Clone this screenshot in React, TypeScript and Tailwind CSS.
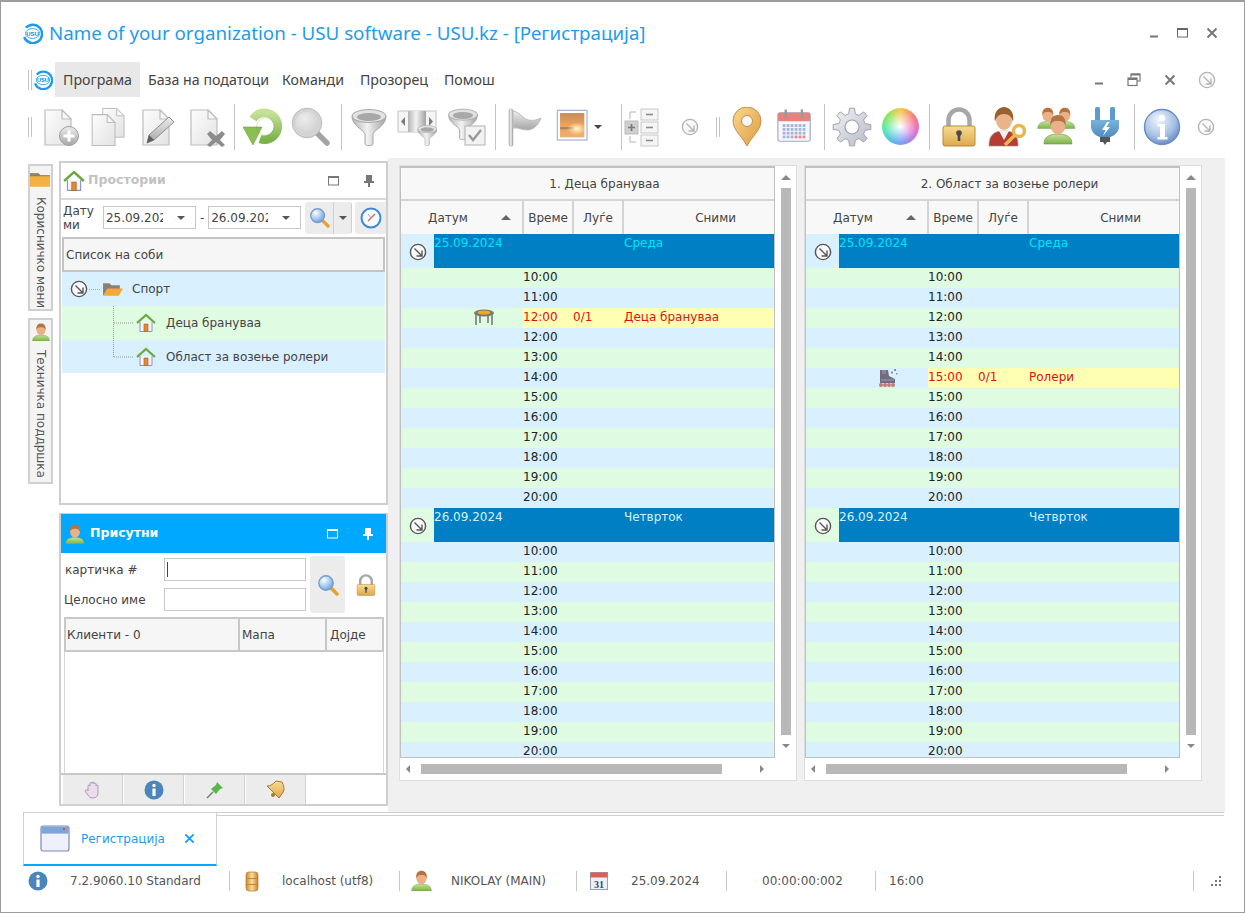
import React from "react";

type P = { s?: number; c?: string };
const Svg = ({ s = 40, vb = 40, children }: { s?: number; vb?: number; children: React.ReactNode }) => (
  <svg width={s} height={s} viewBox={`0 0 ${vb} ${vb}`} className="block shrink-0">{children}</svg>
);

const Defs = () => (
  <svg width="0" height="0" className="block h-0 w-0">
    <defs>
      <linearGradient id="gPage" x1="0" y1="0" x2="1" y2="1"><stop offset="0" stopColor="#fdfdfd" /><stop offset="1" stopColor="#e2e2e2" /></linearGradient>
      <linearGradient id="gGray" x1="0" y1="0" x2="0" y2="1"><stop offset="0" stopColor="#ededed" /><stop offset="1" stopColor="#a6a6a6" /></linearGradient>
      <linearGradient id="gGrayH" x1="0" y1="0" x2="1" y2="0"><stop offset="0" stopColor="#b4b4b4" /><stop offset=".45" stopColor="#f2f2f2" /><stop offset="1" stopColor="#a2a2a2" /></linearGradient>
      <linearGradient id="gGreen" x1="0" y1="0" x2="0" y2="1"><stop offset="0" stopColor="#c4e296" /><stop offset="1" stopColor="#7cb24a" /></linearGradient>
      <linearGradient id="gGold" x1="0" y1="0" x2="0" y2="1"><stop offset="0" stopColor="#f8dc90" /><stop offset="1" stopColor="#dca94c" /></linearGradient>
      <linearGradient id="gPin" x1="0" y1="0" x2="1" y2="1"><stop offset="0" stopColor="#f9d88e" /><stop offset="1" stopColor="#dd9c40" /></linearGradient>
      <linearGradient id="gSun" x1="0" y1="0" x2="0" y2="1"><stop offset="0" stopColor="#c88c58" /><stop offset=".55" stopColor="#f0a45c" /><stop offset="1" stopColor="#eeb070" /></linearGradient>
      <radialGradient id="gGlow"><stop offset="0" stopColor="#fff8d8" /><stop offset="1" stopColor="#fff0b0" stopOpacity="0" /></radialGradient>
      <linearGradient id="gPlug" x1="0" y1="0" x2="0" y2="1"><stop offset="0" stopColor="#79b2dc" /><stop offset="1" stopColor="#4f8cc2" /></linearGradient>
      <radialGradient id="gInfo" cx=".4" cy=".3" r=".8"><stop offset="0" stopColor="#f0f5fc" /><stop offset=".6" stopColor="#a4bfe4" /><stop offset="1" stopColor="#5578b8" /></radialGradient>
      <radialGradient id="gLens" cx=".35" cy=".3" r=".8"><stop offset="0" stopColor="#ffffff" /><stop offset="1" stopColor="#5c9ee0" /></radialGradient>
      <radialGradient id="gGlass" cx=".4" cy=".35" r=".8"><stop offset="0" stopColor="#ececec" /><stop offset="1" stopColor="#c8c8c8" /></radialGradient>
      <linearGradient id="gDb" x1="0" y1="0" x2="1" y2="0"><stop offset="0" stopColor="#d08a30" /><stop offset=".5" stopColor="#fbdc9c" /><stop offset="1" stopColor="#c88228" /></linearGradient>
      <linearGradient id="gGear" x1="0" y1="0" x2="1" y2="1"><stop offset="0" stopColor="#f2f3f6" /><stop offset="1" stopColor="#b6bac4" /></linearGradient>
    </defs>
  </svg>
);

const Logo = ({ s = 21 }: P) => (
  <Svg s={s} vb={24}>
    <path d="M4.5 5.5A10.5 10.5 0 1 1 2.5 16" fill="none" stroke="#1c9cf0" strokeWidth="2.8" />
    <ellipse cx="12" cy="12" rx="8" ry="5.6" fill="#fff" stroke="#1c9cf0" strokeWidth="1" />
    <text x="12" y="14.4" textAnchor="middle" fontSize="6.8" fontWeight="700" fill="#1780cc" fontFamily="Liberation Sans, sans-serif">USU</text>
  </Svg>
);

const Page = ({ x = 0, y = 0 }: { x?: number; y?: number }) => (
  <g transform={`translate(${x} ${y})`}>
    <path d="M7 3h17l9 9v26H7z" fill="url(#gPage)" stroke="#bdbdbd" strokeWidth="1.2" />
    <path d="M24 3v9h9z" fill="#f7f7f7" stroke="#bdbdbd" strokeWidth="1.2" strokeLinejoin="round" />
  </g>
);
const FilePlus = () => (
  <Svg>
    <Page x={-3} />
    <circle cx="28" cy="29" r="9.5" fill="url(#gGray)" stroke="#a0a0a0" />
    <path d="M28 23.5v11M22.5 29h11" stroke="#fff" strokeWidth="3" />
  </Svg>
);
const FileCopy = () => (
  <Svg>
    <g transform="translate(8 -1) scale(.82)"><Page /></g>
    <g transform="translate(-3 5) scale(.88)"><Page /></g>
  </Svg>
);
const FileEdit = () => (
  <Svg>
    <Page x={-2} />
    <path d="M9 36l2-8L31 10l5 5-20 18z" fill="url(#gGray)" stroke="#8f8f8f" />
    <path d="M9 36l2-8 5 5z" fill="#5e5e5e" />
  </Svg>
);
const FileDel = () => (
  <Svg>
    <Page x={-3} />
    <path d="M20 27l3-3 6 5 6-5 3 3-5 6 5 5-3 2-6-5-6 5-3-2 5-5z" fill="#8c8c8c" />
  </Svg>
);
const Refresh = () => (
  <Svg>
    <path d="M10 12A13.5 13.5 0 1 1 17 32" fill="none" stroke="url(#gGreen)" strokeWidth="8.5" />
    <path d="M0 20h19l-9 18z" fill="#8cbf52" stroke="#6fa33c" strokeWidth=".6" />
    <circle cx="22.5" cy="19.5" r="8.8" fill="none" stroke="#5f9330" strokeWidth=".5" opacity=".5" />
  </Svg>
);
const Mag = () => (
  <Svg>
    <path d="M25 25l11 11" stroke="#a4a4a4" strokeWidth="5.5" strokeLinecap="round" />
    <circle cx="16" cy="16" r="13" fill="url(#gGlass)" stroke="#d4d4d4" strokeWidth="3.5" />
    <circle cx="16" cy="16" r="14.8" fill="none" stroke="#aeaeae" strokeWidth=".8" />
  </Svg>
);
const FunnelShape = ({ t = "" }: { t?: string }) => (
  <g transform={t}>
    <path d="M3 9c0 10 11 13 13 18v10c0 2 8 2 8 0V27c2-5 13-8 13-18z" fill="url(#gGrayH)" stroke="#a8a8a8" />
    <ellipse cx="20" cy="9" rx="17" ry="6.5" fill="#e2e2e2" stroke="#a8a8a8" />
    <ellipse cx="20" cy="10" rx="12" ry="4" fill="#a8a8a8" />
  </g>
);
const Funnel = () => <Svg><FunnelShape /></Svg>;
const FunnelCol = () => (
  <Svg>
    <rect x="1" y="4" width="38" height="21" fill="#f5f5f5" stroke="#c4c4c4" />
    <rect x="11" y="4" width="18" height="21" fill="url(#gGrayH)" />
    <path d="M8 10v9l-4-4.5zM32 10v9l4-4.5z" fill="#7c7c7c" />
    <FunnelShape t="translate(19 17) scale(.56)" />
  </Svg>
);
const FunnelChk = () => (
  <Svg>
    <FunnelShape t="translate(-1 0) scale(.85)" />
    <rect x="18" y="19" width="20" height="19" fill="#f2f2f2" stroke="#b0b0b0" />
    <path d="M22 28l4 5 8-10" fill="none" stroke="#9a9a9a" strokeWidth="2.4" />
  </Svg>
);
const Flag = () => (
  <Svg>
    <rect x="4" y="2" width="4" height="37" rx="1.5" fill="url(#gGrayH)" stroke="#a0a0a0" strokeWidth=".5" />
    <path d="M8 4c7 1 9 7 15 9 5 1 9 0 13-2-2 6-7 12-14 12-6 0-9-3-14-2z" fill="url(#gGray)" stroke="#bcbcbc" />
  </Svg>
);
const Img = () => (
  <Svg s={36}>
    <rect x="1.5" y="1.5" width="33" height="33" fill="#fff" stroke="#a6b4d6" strokeWidth="1.4" />
    <rect x="4.5" y="4.5" width="27" height="27" fill="url(#gSun)" />
    <rect x="4.5" y="20" width="15" height="2.5" fill="#8c7560" opacity=".7" />
    <ellipse cx="23" cy="22" rx="11" ry="7" fill="url(#gGlow)" />
  </Svg>
);
const PlusList = () => (
  <Svg>
    <path d="M13 5H7v7M13 35H7v-6" fill="none" stroke="#b4b4b4" />
    <rect x="2" y="14" width="13" height="13" fill="#cfcfcf" stroke="#bcbcbc" />
    <path d="M8.5 17v7M5 20.5h7" stroke="#777" strokeWidth="1.6" />
    {[2, 15, 28].map((y) => (
      <g key={y}>
        <rect x="18" y={y} width="17" height="11" fill="#f5f5f5" stroke="#c8c8c8" />
        <path d={`M23 ${y + 5.5}h7`} stroke="#8c8c8c" strokeWidth="1.6" />
      </g>
    ))}
  </Svg>
);
const CircleArrow = ({ s = 18, c = "#b4b4b4" }: P) => (
  <Svg s={s} vb={18}>
    <circle cx="9" cy="9" r="7.6" fill="#fafafa" stroke={c} strokeWidth="1.4" />
    <path d="M5.5 5.5l7 7M13 7.5V13H7.5" fill="none" stroke={c} strokeWidth="1.4" />
  </Svg>
);
const MapPin = () => (
  <Svg>
    <path d="M20 39C15 29 6 23 6 14a14 14 0 0 1 28 0c0 9-9 15-14 25z" fill="url(#gPin)" stroke="#c58f45" />
    <circle cx="20" cy="14" r="5.5" fill="#f6f6f6" stroke="#c58f45" />
  </Svg>
);
const Cal = () => (
  <Svg s={38}>
    <rect x="2" y="5" width="34" height="30" rx="2" fill="#f8f8fc" stroke="#9aa8c8" strokeWidth="1.2" />
    <rect x="2" y="5" width="34" height="9" rx="2" fill="#e8837b" />
    <rect x="9" y="1.5" width="2.5" height="9" fill="#999" />
    <rect x="26" y="1.5" width="2.5" height="9" fill="#999" />
    {[0, 1, 2, 3].map((r) =>
      [0, 1, 2, 3, 4, 5].map((c) => (
        <rect key={`${r}${c}`} x={7 + c * 4.2} y={17 + r * 4} width="3" height="3" fill={r === 3 && c > 2 ? "#e88f88" : "#a8b4d8"} />
      ))
    )}
  </Svg>
);
const gearPath = (() => {
  const n = 8;
  const pts: string[] = [];
  for (let i = 0; i < n; i++) {
    const a = (i / n) * Math.PI * 2;
    const step = Math.PI / n;
    const p = (r: number, t: number) => `${(20 + r * Math.sin(t)).toFixed(1)} ${(20 - r * Math.cos(t)).toFixed(1)}`;
    pts.push(p(13.5, a - step * 0.62), p(19, a - step * 0.34), p(19, a + step * 0.34), p(13.5, a + step * 0.62));
  }
  return `M${pts.join("L")}Z`;
})();
const Gear = () => (
  <Svg>
    <path d={gearPath} fill="url(#gGear)" stroke="#9ea3b0" strokeWidth="1" strokeLinejoin="round" />
    <circle cx="20" cy="20" r="7" fill="#fbfbfb" stroke="#9ea3b0" strokeWidth="1.2" />
  </Svg>
);
const Wheel = () => (
  <div className="h-[37px] w-[37px] rounded-full bg-[radial-gradient(circle,#ffffff_0%,#ffffff00_62%),conic-gradient(#f6c850,#f5807c,#ec6cc8,#9c8cf0,#58b8f0,#58e8b0,#8ce860,#f6c850)]" />
);
const Lock = ({ s = 40 }: P) => (
  <Svg s={s}>
    <path d="M9.5 20V13a10.5 10.5 0 0 1 21 0v7" fill="none" stroke="#a6a6ac" strokeWidth="4.5" />
    <rect x="4" y="19" width="32" height="20" rx="2" fill="url(#gGold)" stroke="#b98a3c" />
    <circle cx="20" cy="26" r="2.8" fill="#4a4a4a" />
    <rect x="18.7" y="26" width="2.6" height="8" fill="#4a4a4a" />
  </Svg>
);
const Person = ({ x = 0, y = 0, k = 1 }: { x?: number; y?: number; k?: number }) => (
  <g transform={`translate(${x} ${y}) scale(${k})`}>
    <path d="M1 30c0-7 5-10 14-10s14 3 14 10z" fill="url(#gGreen)" stroke="#6b9440" strokeWidth=".6" />
    <ellipse cx="15" cy="11" rx="7.5" ry="9.5" fill="#eab088" />
    <path d="M7.5 12c-1-8 3-11 7.5-11s8.5 3 7.5 11c-1-3-2-5-7.5-5s-6.5 2-7.5 5z" fill="#b4743f" />
  </g>
);
const UserKey = () => (
  <Svg>
    <g transform="translate(2 0)">
      <path d="M0 39c0-11 5-15 15-15s14 4 14 15z" fill="#b83c34" stroke="#8a8a8a" strokeWidth=".6" />
      <path d="M10 24l5 9 5-9z" fill="#f2f2f2" />
      <ellipse cx="15" cy="13" rx="8" ry="10" fill="#eab48a" />
      <path d="M6 15C4 5 10 0 15 0s11 5 9 15c-1-4-3-8-9-8s-8 4-9 8z" fill="#9a6030" />
    </g>
    <circle cx="32" cy="24" r="5.5" fill="none" stroke="#e6b850" strokeWidth="3.5" />
    <path d="M28 28L18 38" stroke="#e6b850" strokeWidth="3.5" />
  </Svg>
);
const Users = () => (
  <Svg>
    <Person x={1} y={0} k={0.72} />
    <Person x={18} y={0} k={0.72} />
    <Person x={7} y={7} k={1} />
  </Svg>
);
const Plug = () => (
  <Svg>
    <rect x="10" y="0" width="5" height="15" rx="1.5" fill="#5f9bd0" />
    <rect x="25" y="0" width="5" height="15" rx="1.5" fill="#5f9bd0" />
    <path d="M6 13h28v7c0 5-5 9-9 10H15c-4-1-9-5-9-10z" fill="url(#gPlug)" />
    <path d="M22 15l-5 8h3.5l-2.5 6 7-9h-3.5l3-5z" fill="#fff" />
    <rect x="15" y="30" width="10" height="5" fill="#555" />
    <path d="M18 35h4l-2 3z" fill="#555" />
  </Svg>
);
const InfoBig = () => (
  <Svg>
    <circle cx="20" cy="20" r="17.5" fill="url(#gInfo)" stroke="#6a8cc6" strokeWidth="1.4" />
    <circle cx="20" cy="11" r="3.2" fill="#fff" />
    <path d="M15.5 17h7.5v13h2.5v2.5h-10V30h2.5V19.5h-2.5z" fill="#fff" />
  </Svg>
);
const House = ({ s = 20 }: P) => (
  <Svg s={s} vb={20}>
    <path d="M4 9v9.5h12V9" fill="#f4f4fa" stroke="#8a96c0" />
    <rect x="8" y="11" width="4" height="7.5" fill="#e38a2e" stroke="#a85c1a" strokeWidth=".6" />
    <path d="M1 10l9-8 9 8" fill="none" stroke="#69a83c" strokeWidth="2.2" />
  </Svg>
);
const FolderOpen = ({ s = 21 }: P) => (
  <Svg s={s} vb={20}>
    <path d="M1 16V4h6l2 2h8v4H6z" fill="#8a8174" />
    <path d="M1 16l4-7h15l-4 7z" fill="#f4a838" />
  </Svg>
);
const FolderTop = () => (
  <Svg s={21} vb={20}>
    <path d="M0 16V3h8l2 2h9v11z" fill="#f4b040" />
    <path d="M0 3h8l2 2h9v1H0z" fill="#8a8174" />
  </Svg>
);
const UserSm = ({ s = 20 }: P) => (
  <Svg s={s} vb={30}>
    <Person />
  </Svg>
);
const BlueMag = ({ s = 22 }: P) => (
  <Svg s={s} vb={22}>
    <path d="M13.5 13.5l6.5 6.5" stroke="#e8a030" strokeWidth="3.5" strokeLinecap="round" />
    <circle cx="9" cy="9" r="7.2" fill="url(#gLens)" stroke="#7a9cc8" strokeWidth="1.4" />
  </Svg>
);
const Clock = () => (
  <Svg s={22} vb={22}>
    <circle cx="11" cy="11" r="9.5" fill="#f8fbff" stroke="#3f88d4" strokeWidth="2" />
    <path d="M11 11l4-4M11 11l-3 3" stroke="#d86a4a" strokeWidth="1.4" />
    <path d="M11 11L8 7" stroke="#8aa4c4" strokeWidth="1" />
  </Svg>
);
const Trampoline = () => (
  <Svg s={22} vb={22}>
    <path d="M3 7v11M19 7v11M7 9v7M15 9v7" stroke="#6d7470" strokeWidth="1.5" />
    <ellipse cx="11" cy="6" rx="10" ry="3.5" fill="#747a76" />
    <ellipse cx="11" cy="5.5" rx="6.5" ry="2" fill="#f5a623" />
  </Svg>
);
const Skate = () => (
  <Svg s={22} vb={22}>
    <path d="M2 3h8l1 6 6 3v4H2z" fill="#6b6f86" />
    <path d="M4 3h4v4H4zM3 12h13v2H3z" fill="#9a7e8e" />
    <rect x="16" y="2" width="2" height="2" fill="#8b8fa6" />
    <rect x="13" y="4.5" width="2" height="2" fill="#8b8fa6" />
    <rect x="18" y="6" width="1.5" height="1.5" fill="#8b8fa6" />
    {[3, 7, 11, 15].map((x) => (
      <circle key={x} cx={x} cy="18" r="2" fill="#c57a7a" />
    ))}
  </Svg>
);
const Hand = () => (
  <Svg s={20} vb={20}>
    <path d="M5 11V6a1 1 0 0 1 2 0V3.5a1 1 0 0 1 2 0V3a1 1 0 0 1 2 0v1a1 1 0 0 1 2 0v2a1 1 0 0 1 2 0v7c0 3-2 5-5 5s-4-1-5-3l-3-4c0-1 2-2 3 0z" fill="#ecdcea" stroke="#a89cc0" />
  </Svg>
);
const InfoSm = ({ s = 20 }: P) => (
  <Svg s={s} vb={20}>
    <circle cx="10" cy="10" r="9.5" fill="#4c84bc" />
    <circle cx="10" cy="5.5" r="1.7" fill="#fff" />
    <rect x="8.4" y="8.5" width="3.2" height="7.5" fill="#fff" />
  </Svg>
);
const GreenPin = () => (
  <Svg s={20} vb={20}>
    <path d="M2 18l6-6" stroke="#777" strokeWidth="1.4" />
    <path d="M6 9l5-4 1-3 6 6-3 1-4 5z" fill="#58b848" />
  </Svg>
);
const Bell = () => (
  <Svg s={22} vb={22}>
    <path d="M2 7c4 0 6-2 9-5l6 1c2 4 2 6 2 8-1 3-3 5-5 8z" fill="url(#gGold)" stroke="#a87c2c" />
    <circle cx="8" cy="16" r="2" fill="#a87c2c" />
  </Svg>
);
const Db = () => (
  <Svg s={22} vb={22}>
    <rect x="5" y="2" width="12" height="19" rx="3" fill="url(#gDb)" stroke="#b8782a" strokeWidth=".7" />
    <path d="M5 8.5h12M5 14.5h12" stroke="#b8782a" strokeWidth=".8" />
  </Svg>
);
const Cal31 = () => (
  <Svg s={20} vb={20}>
    <rect x="1.5" y="1.5" width="17" height="17" fill="#eef0f8" stroke="#94a0be" />
    <rect x="1.5" y="1.5" width="17" height="5" fill="#d8605a" />
    <text x="10" y="16.5" textAnchor="middle" fontSize="10" fontWeight="700" fill="#33456e" fontFamily="Liberation Serif, serif">31</text>
  </Svg>
);
const WinIcon = () => (
  <Svg s={30} vb={30}>
    <rect x="1" y="2" width="28" height="25" rx="2" fill="#eef0fb" stroke="#7c8cb8" strokeWidth="1.2" />
    <rect x="1.6" y="2.6" width="26.8" height="7" fill="#7ea4da" />
    <rect x="23" y="4" width="2" height="2" fill="#e04a3c" />
  </Svg>
);
const Grip = () => <div className="h-[20px] w-[4px] shrink-0 border-x border-[#c4c4c4]" />;
const Sep = () => <div className="h-[46px] w-px shrink-0 bg-[#c2c2c2]" />;
const Slot = ({ className, children }: { className: string; children?: React.ReactNode }) => (
  <div className={`flex shrink-0 items-center justify-center ${className}`}>{children}</div>
);
const Caret = ({ c = "#444" }: { c?: string }) => (
  <svg width="8" height="4" viewBox="0 0 8 4" className="block"><path d="M0 0h8L4 4z" fill={c} /></svg>
);
const UpTri = ({ c = "#777" }: { c?: string }) => (
  <svg width="10" height="5" viewBox="0 0 10 5" className="block"><path d="M0 5h10L5 0z" fill={c} /></svg>
);

const Min = ({ c = "#777" }: { c?: string }) => <svg width="12" height="12" viewBox="0 0 12 12" className="block"><rect x="1" y="8.5" width="8" height="2" fill={c} /></svg>;
const Max = ({ c = "#666" }: { c?: string }) => <svg width="14" height="12" viewBox="0 0 14 12" className="block"><rect x="1.5" y="1.5" width="10" height="8.5" fill="none" stroke={c} /><rect x="1.5" y="1" width="10" height="2" fill={c} /></svg>;
const Restore = () => <svg width="14" height="14" viewBox="0 0 14 14" className="block"><path d="M4 4V1h9v7h-3" fill="none" stroke="#777" strokeWidth="1.2" /><path d="M4 1.5h9" stroke="#777" strokeWidth="2" /><rect x="1" y="5" width="9" height="7.5" fill="#fff" stroke="#777" strokeWidth="1.2" /><path d="M1 6h9" stroke="#777" strokeWidth="2" /></svg>;
const Cross = ({ c = "#777", s = 12 }: P) => <svg width={s} height={s} viewBox="0 0 12 12" className="block"><path d="M1.5 1.5l9 9M10.5 1.5l-9 9" stroke={c} strokeWidth="2" /></svg>;
const PinSm = ({ c = "#777" }: { c?: string }) => <svg width="12" height="14" viewBox="0 0 12 14" className="block"><path d="M3 1h6v6h2v2H7v4H5V9H1V7h2z" fill={c} /></svg>;

type Row = { t: string; hi?: boolean; n?: string; name?: string; icon?: React.ReactNode };
const bg = (i: number) => (i % 2 === 0 ? "bg-[#dffbe2]" : "bg-[#d8f0ff]");

const Group = ({ date, day, color, i }: { date: string; day: string; color: string; i: number }) => (
  <div className="flex h-[34px] shrink-0">
    <div className={`flex w-[33px] shrink-0 items-center justify-center pt-px ${bg(i)}`}><CircleArrow c="#555" /></div>
    <div className={`flex flex-1 bg-[#007fc4] pt-px text-[12px] leading-[16px] ${color}`}>
      <div className="w-[190px]">{date}</div>
      <div>{day}</div>
    </div>
  </div>
);
const TimeRow = ({ r, i }: { r: Row; i: number }) => (
  <div className={`flex h-[20px] shrink-0 text-[12px] leading-[18px] ${bg(i)}`}>
    <div className="flex w-[122px] shrink-0 items-center justify-center pl-[44px]">{r.icon}</div>
    <div className={`flex flex-1 ${r.hi ? "bg-[#ffffb4] text-[#e01010]" : "text-[#222]"}`}>
      <div className="w-[50px]">{r.t}</div>
      <div className="w-[51px]">{r.n}</div>
      <div>{r.name}</div>
    </div>
  </div>
);
const hours = ["10:00", "11:00", "12:00", "13:00", "14:00", "15:00", "16:00", "17:00", "18:00", "19:00", "20:00"];
const HCell = ({ className, children }: { className: string; children: React.ReactNode }) => (
  <div className={`flex h-full shrink-0 items-center border-r-2 border-[#d4d4d4] text-[12px] text-[#444] ${className}`}>{children}</div>
);
const GridPanel = ({ title, day1 }: { title: string; day1: Row[] }) => (
  <div className="flex h-[614px] w-[396px] shrink-0 flex-col bg-white shadow-[0_0_0_1px_#dedede]">
    <div className="flex h-[592px]">
      <div className="flex w-[375px] shrink-0 flex-col overflow-hidden border-x border-b border-t-2 border-[#c0c0c0]">
        <div className="flex h-[33px] shrink-0 items-center justify-center border-b-2 border-[#d4d4d4] bg-[#f8f8f8] pl-[34px] text-[12px] text-[#444]">{title}</div>
        <div className="flex h-[33px] shrink-0 bg-[#f8f8f8]">
          <HCell className="w-[123px] pl-[27px]"><span className="w-[73px]">Датум</span><UpTri c="#666" /></HCell>
          <HCell className="w-[50px] justify-center">Време</HCell>
          <HCell className="w-[50px] justify-center">Луѓе</HCell>
          <div className="flex flex-1 items-center justify-end pr-[38px] text-[12px] text-[#444]">Сними</div>
        </div>
        <div className="flex min-h-0 flex-1 flex-col overflow-hidden">
          <Group date="25.09.2024" day="Среда" color="text-[#00e5f5]" i={1} />
          {day1.map((r, i) => <TimeRow key={i} r={r} i={i} />)}
          <Group date="26.09.2024" day="Четврток" color="text-[#d4f2ff]" i={0} />
          {hours.map((t, i) => <TimeRow key={i} r={{ t }} i={i + 1} />)}
        </div>
      </div>
      <div className="flex w-[21px] flex-col items-center pt-[9px]">
        <UpTri c="#888" />
        <div className="mt-[8px] h-[547px] w-[10px] bg-[#b8b8b8]" />
        <div className="mt-[9px]"><Caret c="#888" /></div>
      </div>
    </div>
    <div className="flex h-[22px] items-center pl-[6px]">
      <svg width="4" height="8" viewBox="0 0 4 8" className="block"><path d="M4 0v8L0 4z" fill="#888" /></svg>
      <div className="ml-[11px] h-[10px] w-[301px] bg-[#b8b8b8]" />
      <svg width="4" height="8" viewBox="0 0 4 8" className="ml-[38px] block"><path d="M0 0v8l4-4z" fill="#888" /></svg>
    </div>
  </div>
);

const rows1: Row[] = [
  { t: "10:00" }, { t: "11:00" },
  { t: "12:00", hi: true, n: "0/1", name: "Деца брануваа", icon: <Trampoline /> },
  { t: "12:00" }, { t: "13:00" }, { t: "14:00" }, { t: "15:00" }, { t: "16:00" }, { t: "17:00" }, { t: "18:00" }, { t: "19:00" }, { t: "20:00" },
];
const rows2: Row[] = [
  { t: "10:00" }, { t: "11:00" }, { t: "12:00" }, { t: "13:00" }, { t: "14:00" },
  { t: "15:00", hi: true, n: "0/1", name: "Ролери", icon: <Skate /> },
  { t: "15:00" }, { t: "16:00" }, { t: "17:00" }, { t: "18:00" }, { t: "19:00" }, { t: "20:00" },
];

const DateBox = ({ v }: { v: string }) => (
  <div className="flex h-[23px] w-[93px] shrink-0 items-center border border-[#c8c8c8] bg-white pl-[2px] text-[12px] text-[#444]">
    <span className="w-[57px] overflow-hidden whitespace-nowrap">{v}</span>
    <span className="ml-[14px]"><Caret c="#555" /></span>
  </div>
);
const ToolBtn = ({ children, className }: { children: React.ReactNode; className: string }) => (
  <div className={`flex h-[32px] shrink-0 items-center justify-center border-r border-[#d0d0d0] bg-[#ececec] ${className}`}>{children}</div>
);
const menuFont = "font-['Noto_Sans',sans-serif] text-[14.2px] pt-px";

export default function App() {
  return (
    <div className="flex h-[913px] w-[1245px] flex-col overflow-hidden border border-t-2 border-[#9c9c9c] bg-white font-['DejaVu_Sans',sans-serif] text-[12px]">
      <Defs />
      <div className="flex h-[60px] shrink-0 items-center pt-[2px]">
        <div className="ml-[21px]"><Logo /></div>
        <div className="ml-[6px] whitespace-nowrap font-['Noto_Sans',sans-serif] text-[18.75px] text-[#1c9cf0]">Name of your organization - USU software - USU.kz - [Регистрација]</div>
        <div className="ml-auto flex items-center">
          <Slot className="w-[28px]"><Min /></Slot>
          <Slot className="w-[28px]"><Max /></Slot>
          <Slot className="w-[30px]"><Cross /></Slot>
          <div className="w-[17px]" />
        </div>
      </div>
      <div className="flex h-[35px] shrink-0 items-center text-[#444]">
        <div className="ml-[27px]"><Grip /></div>
        <div className="ml-px mr-[2px]"><Logo s={20} /></div>
        <div className={`flex h-full w-[85px] items-center justify-center bg-[#e8e8e8] ${menuFont}`}>Програма</div>
        <div className={`ml-[8px] ${menuFont}`}>База на податоци</div>
        <div className={`ml-[13px] ${menuFont}`}>Команди</div>
        <div className={`ml-[16px] ${menuFont}`}>Прозорец</div>
        <div className={`ml-[16px] ${menuFont}`}>Помош</div>
        <div className="ml-auto flex items-center">
          <Slot className="w-[32px]"><Min /></Slot>
          <Slot className="w-[36px]"><Restore /></Slot>
          <Slot className="w-[36px]"><Cross /></Slot>
          <Slot className="w-[38px]"><CircleArrow /></Slot>
          <div className="w-[18px]" />
        </div>
      </div>
      <div className="flex h-[61px] shrink-0 items-center pb-[2px]">
        <div className="w-[27px] shrink-0" />
        <Grip />
        <div className="w-[5px] shrink-0" />
        <Slot className="w-[48px]"><FilePlus /></Slot>
        <Slot className="w-[48px]"><FileCopy /></Slot>
        <Slot className="w-[49px]"><FileEdit /></Slot>
        <Slot className="w-[50px]"><FileDel /></Slot>
        <div className="w-[2px] shrink-0" />
        <Sep />
        <Slot className="w-[55px]"><Refresh /></Slot>
        <Slot className="w-[42px]"><Mag /></Slot>
        <div className="w-[9px] shrink-0" />
        <Sep />
        <Slot className="w-[54px]"><Funnel /></Slot>
        <Slot className="w-[42px]"><FunnelCol /></Slot>
        <Slot className="w-[57px]"><FunnelChk /></Slot>
        <Sep />
        <Slot className="w-[58px]"><Flag /></Slot>
        <Slot className="w-[40px]"><Img /></Slot>
        <Slot className="w-[8px]"><Caret /></Slot>
        <div className="w-[19px] shrink-0" />
        <Sep />
        <Slot className="w-[42px]"><PlusList /></Slot>
        <Slot className="w-[52px]"><CircleArrow /></Slot>
        <Grip />
        <Slot className="w-[53px]"><MapPin /></Slot>
        <Slot className="w-[44px]"><Cal /></Slot>
        <div className="w-[7px] shrink-0" />
        <Sep />
        <Slot className="w-[54px]"><Gear /></Slot>
        <Slot className="w-[42px]"><Wheel /></Slot>
        <div className="w-[8px] shrink-0" />
        <Sep />
        <Slot className="w-[58px]"><Lock /></Slot>
        <Slot className="w-[38px]"><UserKey /></Slot>
        <Slot className="w-[60px]"><Users /></Slot>
        <Slot className="w-[38px]"><Plug /></Slot>
        <div className="w-[10px] shrink-0" />
        <Sep />
        <Slot className="w-[54px]"><InfoBig /></Slot>
        <Slot className="w-[34px]"><CircleArrow /></Slot>
      </div>
      <div className="flex h-[654px] shrink-0">
        <div className="flex w-[387px] shrink-0">
          <div className="ml-[27px] flex w-[25px] shrink-0 flex-col gap-[7px] pt-[6px]">
            <div className="flex h-[147px] flex-col items-center overflow-hidden border-2 border-[#d0d0d0] bg-[#f4f4f4]">
              <div className="mt-[4px]"><FolderTop /></div>
              <div className="mt-[6px] whitespace-nowrap text-[12px] leading-[20px] text-[#555] [writing-mode:vertical-rl]">Корисничко мени</div>
            </div>
            <div className="flex h-[166px] flex-col items-center overflow-hidden border-2 border-[#d0d0d0] bg-[#f4f4f4]">
              <div className="mt-[3px]"><UserSm s={18} /></div>
              <div className="mt-[9px] whitespace-nowrap text-[12px] leading-[20px] text-[#555] [writing-mode:vertical-rl]">Техничка поддршка</div>
            </div>
          </div>
          <div className="ml-[6px] flex w-[329px] shrink-0 flex-col gap-[8px] pt-[3px]">
            <div className="flex h-[344px] shrink-0 flex-col border-2 border-[#cfcfcf]">
              <div className="flex h-[37px] shrink-0 items-center border-b-2 border-[#d8d8d8] pl-[2px]">
                <House s={22} />
                <span className="ml-[3px] text-[12.5px] font-bold text-[#c2c2c2]">Простории</span>
                <div className="ml-auto flex items-center pr-[11px]">
                  <Max c="#777" />
                  <div className="ml-[22px]"><PinSm /></div>
                </div>
              </div>
              <div className="flex h-[37px] shrink-0 items-center pb-[2px] pl-[2px]">
                <div className="w-[40px] text-[12px] leading-[14px] text-[#444]">Дату<br />ми</div>
                <DateBox v="25.09.2024" />
                <span className="mx-[4px] text-[#444]">-</span>
                <DateBox v="26.09.2024" />
                <div className="ml-[4px] flex overflow-hidden rounded-[3px]">
                  <ToolBtn className="w-[29px]"><BlueMag s={21} /></ToolBtn>
                  <ToolBtn className="w-[18px]"><Caret c="#555" /></ToolBtn>
                </div>
                <div className="ml-[3px] flex h-[32px] w-[31px] items-center justify-center rounded-l-[3px] bg-[#ececec]"><Clock /></div>
              </div>
              <div className="ml-px flex min-h-0 w-[323px] flex-1 flex-col text-[#444]">
                <div className="flex h-[35px] shrink-0 items-center border-2 border-[#c4c4c4] bg-[#f6f6f6] pl-[2px] text-[12px]">Список на соби</div>
                <div className="flex h-[34px] shrink-0 items-center bg-[#d8f0ff] pl-[8px]">
                  <CircleArrow c="#555" />
                  <span className="ml-px w-[11px] border-t border-dotted border-[#aaa]" />
                  <div className="ml-[2px]"><FolderOpen /></div>
                  <span className="ml-[9px]">Спорт</span>
                </div>
                <div className="flex h-[34px] shrink-0 items-center bg-[#dffbe2]">
                  <svg width="74" height="34" viewBox="0 0 74 34" className="block shrink-0"><path d="M51.5 0v34M52 17h20" stroke="#999" strokeDasharray="1 1" /></svg>
                  <House />
                  <span className="ml-[10px]">Деца брануваа</span>
                </div>
                <div className="flex h-[33px] shrink-0 items-center bg-[#d8f0ff]">
                  <svg width="74" height="33" viewBox="0 0 74 33" className="block shrink-0"><path d="M51.5 0v17M52 17h20" stroke="#999" strokeDasharray="1 1" /></svg>
                  <House />
                  <span className="ml-[10px]">Област за возење ролери</span>
                </div>
              </div>
            </div>
            <div className="flex h-[293px] shrink-0 flex-col border-2 border-t border-[#cfcfcf]">
              <div className="flex h-[39px] shrink-0 items-center bg-[#00a8ff] pl-[4px] text-white">
                <UserSm />
                <span className="ml-[5px] text-[12.5px] font-bold">Присутни</span>
                <div className="ml-auto flex items-center pr-[12px]">
                  <Max c="#fff" />
                  <div className="ml-[22px]"><PinSm c="#fff" /></div>
                </div>
              </div>
              <div className="flex h-[62px] shrink-0 pl-[3px] pt-[3px] text-[#444]">
                <div className="flex w-[100px] shrink-0 flex-col gap-[10px] pt-[4px] text-[12px] leading-[20px]">
                  <span className="pl-px">картичка #</span>
                  <span>Целосно име</span>
                </div>
                <div className="flex w-[142px] shrink-0 flex-col gap-[7px] pt-[2px]">
                  <div className="flex h-[23px] items-center border border-[#c8c8c8] pl-[2px]"><div className="h-[15px] w-px bg-[#444]" /></div>
                  <div className="h-[23px] border border-[#c8c8c8]" />
                </div>
                <div className="ml-[4px] flex h-[57px] w-[35px] items-center justify-center rounded-[3px] bg-[#ececec]"><BlueMag /></div>
                <div className="ml-[10px] flex h-[57px] items-center"><Lock s={22} /></div>
              </div>
              <div className="ml-[3px] mt-[2px] flex h-[35px] w-[320px] shrink-0 border-2 border-[#c8c8c8] bg-[#f6f6f6] text-[#444]">
                <div className="flex w-[174px] items-center border-r-2 border-[#c8c8c8] pl-[1px]">Клиенти - 0</div>
                <div className="flex w-[87px] items-center border-r-2 border-[#c8c8c8] pl-[2px]">Мапа</div>
                <div className="flex flex-1 items-center pl-[3px]">Дојде</div>
              </div>
              <div className="ml-[3px] h-[121px] w-[320px] shrink-0 border-x border-[#d8d8d8]" />
              <div className="flex h-[32px] shrink-0 gap-px border-t-2 border-[#c8c8c8] pl-[2px]">
                {[<Hand key="h" />, <InfoSm key="i" />, <GreenPin key="p" />, <Bell key="b" />].map((ic, i) => (
                  <div key={i} className="flex h-full w-[60px] items-center justify-center border-r border-b border-[#d0d0d0] bg-[#ececec]">{ic}</div>
                ))}
              </div>
            </div>
          </div>
        </div>
        <div className="flex w-[837px] shrink-0 gap-[9px] bg-[#f0f0f0] pl-[12px] pt-[8px]">
          <GridPanel title="1. Деца брануваа" day1={rows1} />
          <GridPanel title="2. Област за возење ролери" day1={rows2} />
        </div>
      </div>
      <div className="ml-[22px] flex h-[54px] shrink-0 items-start">
        <div className="flex h-[54px] w-[194px] shrink-0 items-center border-x border-t border-b-2 border-x-[#d0d0d0] border-t-[#d0d0d0] border-b-[#00a8ff] pl-[16px]">
          <WinIcon />
          <span className="ml-[11px] text-[12px] text-[#1c9cf0]">Регистрација</span>
          <div className="ml-[19px]"><Cross c="#1c9cf0" s={11} /></div>
        </div>
        <div className="h-[4px] w-[1007px] border-y border-[#cfcfcf]" />
      </div>
      <div className="flex h-[28px] shrink-0 items-center pt-px text-[12px] text-[#555]">
        <div className="ml-[27px]"><InfoSm /></div>
        <span className="ml-[22px] w-[159px] whitespace-nowrap">7.2.9060.10 Standard</span>
        <div className="h-[20px] w-px bg-[#c8c8c8]" />
        <div className="ml-[11px]"><Db /></div>
        <span className="ml-[19px] w-[117px] whitespace-nowrap">localhost (utf8)</span>
        <div className="h-[20px] w-px bg-[#c8c8c8]" />
        <div className="ml-[11px]"><UserSm s={21} /></div>
        <span className="ml-[19px] w-[125px] whitespace-nowrap">NIKOLAY (MAIN)</span>
        <div className="h-[20px] w-px bg-[#c8c8c8]" />
        <div className="ml-[12px]"><Cal31 /></div>
        <span className="ml-[22px] w-[95px] whitespace-nowrap">25.09.2024</span>
        <div className="h-[20px] w-px bg-[#c8c8c8]" />
        <span className="ml-[35px] w-[113px] whitespace-nowrap">00:00:00:002</span>
        <div className="h-[20px] w-px bg-[#c8c8c8]" />
        <span className="ml-[13px] w-[304px] whitespace-nowrap">16:00</span>
        <div className="h-[20px] w-px bg-[#c8c8c8]" />
        <svg width="14" height="14" viewBox="0 0 14 14" className="ml-[15px] block"><path d="M10 2h2v2h-2zM6 6h2v2H6zM10 6h2v2h-2zM2 10h2v2H2zM6 10h2v2H6zM10 10h2v2h-2z" fill="#777" /></svg>
      </div>
    </div>
  );
}
